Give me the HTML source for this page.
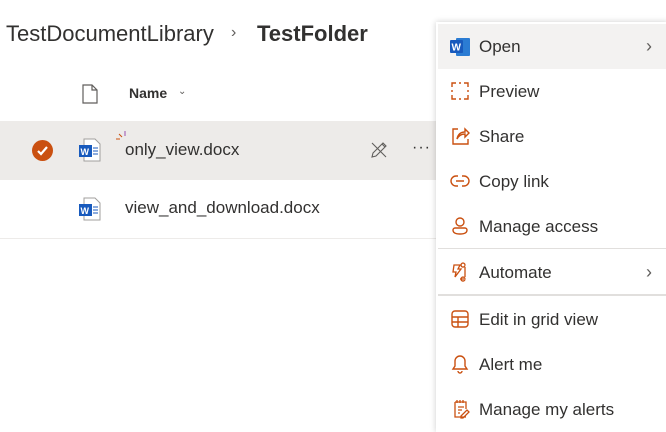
<!DOCTYPE html><html><head><style>
body{margin:0;width:666px;height:429px;overflow:hidden;background:#fff;font-family:"Liberation Sans",sans-serif;color:#323130;position:relative}
.a{position:absolute}
.mi{position:absolute;left:438px;width:228px;height:45px;display:flex;align-items:center;font-size:17px;color:#323130}
.mi svg{position:absolute;left:12px;top:12px}
.mi span{position:absolute;left:41px}
.mi span.chev{left:auto;right:14px;color:#605e5c;font-size:18px}
</style></head><body>
<div class="a" style="left:6px;top:21px;font-size:22px;color:#323130">TestDocumentLibrary</div>
<div class="a" style="left:231px;top:24px;font-size:16px;color:#605e5c">›</div>
<div class="a" style="left:257px;top:21px;font-size:22px;font-weight:bold">TestFolder</div>
<svg class="a" style="left:80px;top:83px" width="20" height="22"><path d="M3 2h9l5 5v13H3z M12 2v5h5" fill="none" stroke="#605e5c" stroke-width="1.2"/></svg>
<div class="a" style="left:129px;top:85px;font-size:14px;font-weight:bold">Name</div>
<div class="a" style="left:178px;top:86px;font-size:10px;color:#605e5c">⌄</div>
<div class="a" style="left:0;top:121px;width:440px;height:59px;background:#edebe9"></div>
<div class="a" style="left:32px;top:140px;width:21px;height:21px;border-radius:50%;background:#ca5010"></div>
<svg class="a" style="left:32px;top:140px" width="21" height="21"><path d="M6 11l3 3 6-7" fill="none" stroke="#fff" stroke-width="2.2"/></svg>
<svg class="a" style="left:78px;top:138px" width="24" height="24"><path d="M6 1h11l5 5v17H6z" fill="#fff" stroke="#a19f9d"/><rect x="1" y="7" width="13" height="12" fill="#185abd"/><text x="2.5" y="17" font-size="9" fill="#fff" font-weight="bold" font-family="Liberation Sans">W</text><path d="M15 10h5M15 13h5M15 16h5" stroke="#185abd"/></svg>
<svg class="a" style="left:115px;top:131px" width="12" height="12"><path d="M1 8h4M4 3l3 3" stroke="#ca5010"/><path d="M10 0v5" stroke="#9c4fb0"/></svg>
<div class="a" style="left:125px;top:140px;font-size:17px">only_view.docx</div>
<svg class="a" style="left:370px;top:141px" width="18" height="18"><path d="M2 16l1-4 10-10 3 3-10 10z M12 3l3 3 M2 2l14 14" fill="none" stroke="#605e5c" stroke-width="1.1"/></svg>
<div class="a" style="left:412px;top:139px;font-size:16px;color:#323130;letter-spacing:1px">···</div>
<svg class="a" style="left:78px;top:197px" width="24" height="24"><path d="M6 1h11l5 5v17H6z" fill="#fff" stroke="#a19f9d"/><rect x="1" y="7" width="13" height="12" fill="#185abd"/><text x="2.5" y="17" font-size="9" fill="#fff" font-weight="bold" font-family="Liberation Sans">W</text><path d="M15 10h5M15 13h5M15 16h5" stroke="#185abd"/></svg>
<div class="a" style="left:125px;top:198px;font-size:17px">view_and_download.docx</div>
<div class="a" style="left:0;top:238px;width:440px;height:1px;background:#edebe9"></div>

<div class="a" style="left:436px;top:22px;width:232px;height:410px;background:#fff;box-shadow:0 0 6px rgba(0,0,0,.2)"></div>
<div class="mi" style="top:24px;background:#f3f2f1"><svg width="22" height="22"><rect x="6" y="2" width="14" height="18" rx="1" fill="#2b7cd3"/><rect x="0" y="4" width="13" height="13" rx="1" fill="#185abd"/><text x="1.5" y="14.5" font-size="10" fill="#fff" font-weight="bold" font-family="Liberation Sans">W</text></svg><span>Open</span><span class="chev">›</span></div>
<div class="mi" style="top:69px"><svg width="20" height="20"><path d="M2 6V2h4M14 2h4v4M18 14v4h-4M6 18H2v-4M9 2h2M9 18h2M2 9v2M18 9v2" fill="none" stroke="#ca5010" stroke-width="1.4"/></svg><span>Preview</span></div>
<div class="mi" style="top:114px"><svg width="20" height="20"><path d="M8 3H3v15h15v-5M7 13c1-5 4-7 8-7V3l4 4-4 4V8c-3 0-6 1-8 5z" fill="none" stroke="#ca5010" stroke-width="1.4"/></svg><span>Share</span></div>
<div class="mi" style="top:159px"><svg width="20" height="20"><path d="M8 5H6a5 5 0 000 10h2M12 5h2a5 5 0 010 10h-2M6 10h8" fill="none" stroke="#ca5010" stroke-width="1.4"/></svg><span>Copy link</span></div>
<div class="mi" style="top:204px"><svg width="20" height="20"><circle cx="10" cy="6" r="4" fill="none" stroke="#ca5010" stroke-width="1.4"/><path d="M3 14a2 2 0 012-2h10a2 2 0 012 2c0 3-3 4-7 4s-7-1-7-4z" fill="none" stroke="#ca5010" stroke-width="1.4"/></svg><span>Manage access</span></div>
<div class="a" style="left:438px;top:248px;width:228px;height:1px;background:#e1dfdd"></div>
<div class="mi" style="top:250px"><svg width="20" height="20"><path d="M4 3h6l-2 4h3l-6 8 1-5H3z M15 5v10M15 3a2 2 0 100 .1M15 17a2 2 0 100 .1M10 17h4" fill="none" stroke="#ca5010" stroke-width="1.3"/></svg><span>Automate</span><span class="chev">›</span></div>
<div class="a" style="left:438px;top:294px;width:228px;height:2px;background:#e1dfdd"></div>
<div class="mi" style="top:297px"><svg width="20" height="20"><rect x="2" y="2" width="16" height="16" rx="3" fill="none" stroke="#ca5010" stroke-width="1.4"/><path d="M2 8h16M2 13h16M8 8v10" stroke="#ca5010" stroke-width="1.4"/></svg><span>Edit in grid view</span></div>
<div class="mi" style="top:342px"><svg width="20" height="20"><path d="M10 2a5 5 0 00-5 5v5l-2 3h14l-2-3V7a5 5 0 00-5-5zM8 17a2 2 0 004 0" fill="none" stroke="#ca5010" stroke-width="1.4"/></svg><span>Alert me</span></div>
<div class="mi" style="top:387px"><svg width="20" height="20"><path d="M5 3h11v7M16 18H5V3M7 1v3M10 1v3M13 1v3M8 8h6M8 11h4M8 14h2M11 17l6-6 2 2-6 6h-2z" fill="none" stroke="#ca5010" stroke-width="1.3"/></svg><span>Manage my alerts</span></div>
</body></html>
